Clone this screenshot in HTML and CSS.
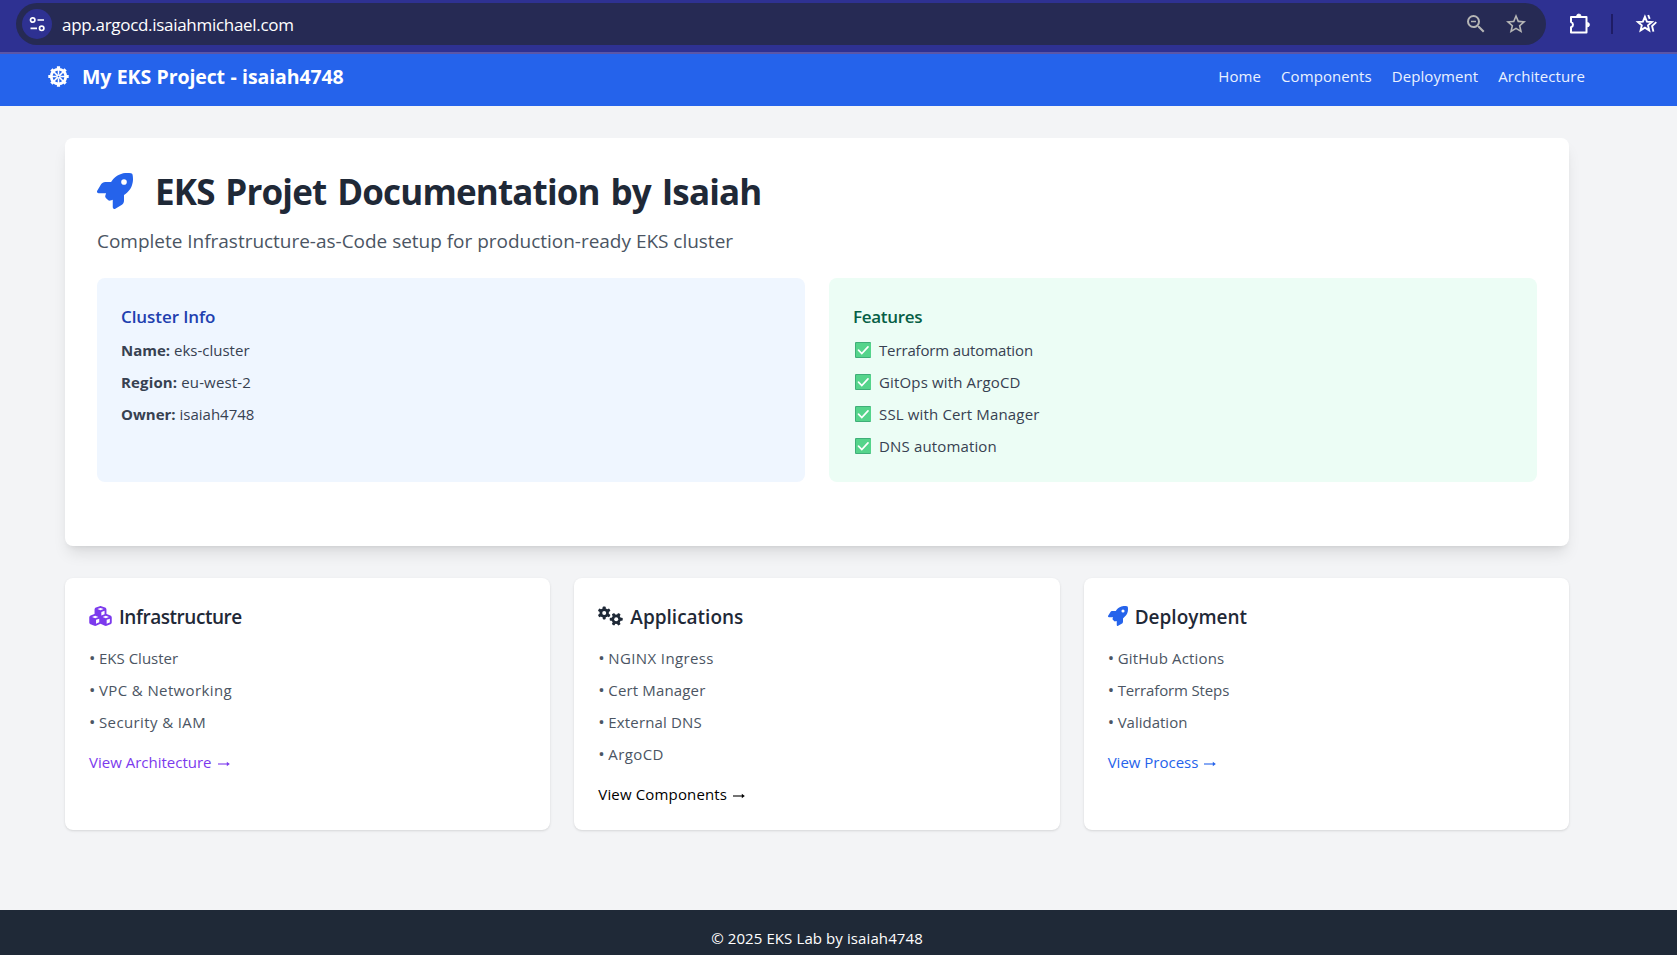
FILE: index.html
```html
<!DOCTYPE html>
<html lang="en">
<head>
<meta charset="utf-8">
<title>EKS Lab</title>
<link rel="stylesheet" href="styles.css">
</head>
<body>
<svg class="defs" aria-hidden="true">
  <symbol id="rocket" viewBox="0 0 512 512"><path d="M156.600 384.900L125.700 354c-8.500-8.500-11.500-20.800-7.700-32.200c3-8.900 7-20.500 11.800-33.800L24 288c-8.600 0-16.600-4.600-20.900-12.100s-4.200-16.700 .2-24.100l52.500-88.500c13-21.900 36.500-35.300 61.900-35.300l82.300 0c2.400-4 4.800-7.700 7.200-11.300C289.100-4.100 411.100-8.100 483.900 5.300c11.600 2.100 20.600 11.200 22.800 22.800c13.400 72.900 9.300 194.800-111.400 276.700c-3.500 2.400-7.300 4.800-11.300 7.200v82.300c0 25.400-13.400 49-35.300 61.900l-88.500 52.500c-7.400 4.400-16.600 4.500-24.100 .2s-12.100-12.200-12.100-20.900V380.800c-14.100 4.900-26.400 8.900-35.700 11.900c-11.200 3.600-23.400 .5-31.800-7.800zM384 168a40 40 0 1 0 0-80 40 40 0 1 0 0 80z"/></symbol>
  <symbol id="cubes" viewBox="0 0 576 512"><path fill-rule="evenodd" d="M290.8 48.600l78.400 29.700L288 109.500 206.800 78.300l78.400-29.700c1.800-.7 3.800-.7 5.700 0zM136 92.500V204.700c-1.300 .4-2.600 .8-3.900 1.300l-96 36.400C14.400 250.600 0 271.500 0 294.700V413.900c0 22.200 13.100 42.300 33.500 51.300l96 42.200c14.400 6.300 30.700 6.300 45.100 0L288 457.500l113.500 49.900c14.400 6.300 30.700 6.300 45.100 0l96-42.200c20.300-8.900 33.500-29.100 33.500-51.300V294.700c0-23.300-14.400-44.100-36.100-52.400l-96-36.400c-1.300-.5-2.600-.9-3.900-1.300V92.500c0-23.300-14.400-44.100-36.100-52.400L308 3.700c-12.800-4.800-26.900-4.800-39.700 0l-96 36.400C150.400 48.400 136 69.300 136 92.500zM392 210.600l-82.400 31.200V152.600L392 121v89.600zM154.800 250.900l78.400 29.700L152 311.700 70.800 280.600l78.400-29.700c1.800-.7 3.800-.7 5.700 0zm18.800 204.400V354.800L256 323.200v95.900l-82.400 36.200zM421.200 250.900c1.800-.7 3.800-.7 5.700 0l78.400 29.700L424 311.700l-81.200-31.100 78.400-29.700zM523.200 421.200l-77.600 34.100V354.800L528 323.200v90.700c0 3.200-1.900 6-4.800 7.300z"/></symbol>
  <symbol id="gear" viewBox="-7 -7 14 14"><circle r="4.700"/><g><rect x="-1.500" y="-6.500" width="3" height="13" rx=".8"/><rect x="-1.500" y="-6.500" width="3" height="13" rx=".8" transform="rotate(60)"/><rect x="-1.500" y="-6.500" width="3" height="13" rx=".8" transform="rotate(120)"/></g><circle r="2" fill="#fff"/></symbol>
  <symbol id="check" viewBox="0 0 16 16"><rect width="16" height="16" rx="1" fill="#3fae78"/><rect x="1" y="1" width="15" height="14" rx=".5" fill="#55d48b"/><path d="M3.500 8.200l3.300 3.300 6.200-6.700" fill="none" stroke="#fff" stroke-width="1.700" stroke-linecap="round"/></symbol>
  <symbol id="arrow" viewBox="0 0 12 8"><path d="M0 4h10" stroke="currentColor" stroke-width="1.100"/><path d="M8.800 1.700L11.800 4 8.800 6.300z"/></symbol>
</svg>

<div class="browser">
  <div class="omnibox">
    <span class="site"><svg class="line" width="18" height="18" viewBox="0 0 18 18" stroke-width="1.700"><circle cx="4.700" cy="5" r="2.200"/><path d="M9.500 5h6.500M2.500 13.300h6.500"/><circle cx="13.700" cy="13.300" r="2.200"/></svg></span>
    <span class="url">app.argocd.isaiahmichael.com</span>
    <svg class="dim zoom" width="24" height="24" viewBox="0 0 24 24"><path d="M15.500 14h-.79l-.28-.27A6.470 6.470 0 0 0 16 9.500 6.500 6.500 0 1 0 9.500 16c1.610 0 3.090-.59 4.230-1.570l.27.28v.79l5 4.990L20.490 19l-4.990-5zm-6 0C7.010 14 5 11.990 5 9.500S7.010 5 9.500 5 14 7.010 14 9.500 11.990 14 9.500 14zM7 8.800h5v1.500H7z"/></svg>
    <svg class="dim" width="24" height="24" viewBox="0 0 24 24"><path d="M22 9.240l-7.190-.62L12 2 9.190 8.630 2 9.240l5.460 4.730L5.820 21 12 17.270 18.180 21l-1.630-7.030L22 9.240zM12 15.400l-3.760 2.270 1-4.280-3.320-2.880 4.380-.38L12 6.100l1.710 4.040 4.380.38-3.320 2.880 1 4.280L12 15.400z"/></svg>
  </div>
  <svg class="ext" width="22" height="22" viewBox="0 0 22 22"><path d="M2 4h15.500v15.500H2v-5.200a2.700 2.700 0 0 0 0-5.200z" fill="none" stroke="#fff" stroke-width="2" stroke-linejoin="round"/><path d="M7.600 3.200a2.200 2.200 0 0 1 4.400 0zM18.300 9.500a2.200 2.200 0 0 1 0 4.400z" fill="#fff" stroke="#fff" stroke-width=".8"/></svg>
  <span class="divider"></span>
  <svg class="line fav" width="24" height="24" viewBox="0 0 24 24" stroke-width="1.900"><path d="M10.900 4.700l2 4.900 5 .4-3.900 3.300 1.200 5.100-4.300-2.700-4.300 2.700 1.200-5.100L3.900 10l5-.4z"/><path d="M14.200 3l1.500 3.800M22.300 10.100l-4.200 3.900 1.300 5.600"/></svg>
</div>

<nav class="topnav">
  <div class="brand">
    <svg class="line wheel" width="21" height="21" viewBox="-10.500 -10.500 21 21" stroke-width="1.500"><circle r="7.300" stroke-width="2.800"/><circle r="1.600"/><path d="M0-7V-2M0 7V2M-7 0H-2M7 0H2M-5-5L-1.400-1.400M5 5L1.400 1.400M5-5L1.400-1.400M-5 5L-1.400 1.400"/><path d="M0-10.200v2M0 10.200v-2M-10.200 0h2M10.200 0h-2M-7.100-7.100l1.400 1.400M7.100 7.100L5.700 5.700M-7.100 7.100l1.400-1.400M7.100-7.100L5.700-5.700" stroke-width="3.200"/></svg>
    <span class="brand-name">My EKS Project - isaiah4748</span>
  </div>
  <div class="links"><a>Home</a><a>Components</a><a>Deployment</a><a>Architecture</a></div>
</nav>

<main class="content">
  <section class="hero">
    <h1><svg class="blue" width="36" height="36"><use href="#rocket"/></svg><span>EKS Projet Documentation by Isaiah</span></h1>
    <p class="lead">Complete Infrastructure-as-Code setup for production-ready EKS cluster</p>
    <div class="panels">
      <div class="panel info">
        <h3>Cluster Info</h3>
        <ul><li><b>Name:</b> eks-cluster</li><li><b class="loose">Region:</b> <span class="loose">eu-west-2</span></li><li><b>Owner:</b> isaiah4748</li></ul>
      </div>
      <div class="panel features">
        <h3 class="tight">Features</h3>
        <ul>
          <li><svg width="16" height="16"><use href="#check"/></svg><span class="snug">Terraform automation</span></li>
          <li><svg width="16" height="16"><use href="#check"/></svg><span class="loose">GitOps with ArgoCD</span></li>
          <li><svg width="16" height="16"><use href="#check"/></svg><span class="loose">SSL with Cert Manager</span></li>
          <li><svg width="16" height="16"><use href="#check"/></svg><span class="loose">DNS automation</span></li>
        </ul>
      </div>
    </div>
  </section>

  <section class="cards">
    <article class="card">
      <h2><svg class="purple" width="23" height="20"><use href="#cubes"/></svg><span class="tighter">Infrastructure</span></h2>
      <ul><li><i>•</i>EKS Cluster</li><li class="wide"><i>•</i>VPC &amp; Networking</li><li class="wide"><i>•</i>Security &amp; IAM</li></ul>
      <a class="more purple">View Architecture<svg class="arrow" width="12" height="8"><use href="#arrow"/></svg></a>
    </article>
    <article class="card">
      <h2><svg width="25" height="20" viewBox="0 0 25 20"><use href="#gear" x="-.8" y="-.1" width="14" height="14"/><use href="#gear" x="11.200" y="6.300" width="14" height="14" transform="rotate(90 18.200 13.300)"/></svg><span>Applications</span></h2>
      <ul><li class="wide"><i>•</i>NGINX Ingress</li><li class="loose"><i>•</i>Cert Manager</li><li class="loose"><i>•</i>External DNS</li><li class="wide"><i>•</i>ArgoCD</li></ul>
      <a class="more loose">View Components<svg class="arrow" width="12" height="8"><use href="#arrow"/></svg></a>
    </article>
    <article class="card">
      <h2><svg class="blue" width="20" height="20"><use href="#rocket"/></svg><span>Deployment</span></h2>
      <ul><li class="loose"><i>•</i>GitHub Actions</li><li class="snug"><i>•</i>Terraform Steps</li><li><i>•</i>Validation</li></ul>
      <a class="more blue">View Process<svg class="arrow" width="12" height="8"><use href="#arrow"/></svg></a>
    </article>
  </section>
</main>
<footer>© 2025 EKS Lab by isaiah4748</footer>
</body>
</html>
```
FILE: styles.css
```css
* { box-sizing: border-box; }
body {
  margin: 0;
  height: 955px;
  overflow: hidden;
  background: #f3f4f6;
  color: #000;
  font: 15px/24px "Open Sans", "Noto Sans", sans-serif;
}
svg { fill: currentColor; flex: none; }
svg.line { fill: none; stroke: #fff; }
h1, h2, h3, p, ul { margin: 0; padding: 0; list-style: none; }
.defs { position: absolute; width: 0; height: 0; }

/* letter-spacing steps */
.tighter { letter-spacing: -.45px; }
.tight { letter-spacing: -.3px; }
.snug { letter-spacing: -.14px; }
.loose { letter-spacing: .15px; }
.wide { letter-spacing: .38px; }

.browser {
  display: flex;
  align-items: center;
  height: 54px;
  padding: 0 18px 4px 16px;
  background: #2e3192;
  border-bottom: 2px solid #5a56a8;
  color: #fff;
}
.omnibox {
  display: flex;
  align-items: center;
  width: 1530px;
  height: 42px;
  padding: 0 18px 0 6px;
  border-radius: 21px;
  background: #262a54;
}
.site {
  display: grid;
  place-items: center;
  width: 30px;
  height: 30px;
  border-radius: 50%;
  background: #2e3192;
}
.url { margin-left: 10px; padding-top: 1px; font-size: 17px; letter-spacing: -.3px; }
.dim { color: #b5b5b5; }
.zoom { margin-left: auto; margin-right: 16px; }
.ext { margin-left: 23px; }
.divider { width: 2px; height: 20px; margin-left: 20px; background: #1e1c66; }
.fav { margin-left: 21px; }

.topnav {
  display: flex;
  justify-content: space-between;
  height: 52px;
  padding: 8px 92px 16px 48px;
  background: #2563eb;
  color: #fff;
}
.brand { display: flex; align-items: center; gap: 13px; }
.wheel { margin-top: 1px; }
.brand-name { padding-top: 2px; font-size: 19.5px; font-weight: 700; line-height: 28px; letter-spacing: -.1px; word-spacing: .5px; }
.links { display: flex; align-items: center; gap: 20px; color: #eaf1ff; letter-spacing: .08px; }

.content { padding: 32px 108px 80px 65px; }
.hero {
  padding: 32px;
  border-radius: 8px;
  background: #fff;
  box-shadow: 0 10px 15px -3px rgba(0, 0, 0, .1), 0 4px 6px -4px rgba(0, 0, 0, .1);
}
.hero h1 {
  display: flex;
  gap: 22px;
  margin-bottom: 15px;
  padding-top: 2px;
  color: #1f2937;
  font-size: 35px;
  line-height: 40px;
  letter-spacing: -.84px;
  word-spacing: 2.5px;
}
.hero h1 svg { margin-top: 1px; }
.blue { color: #2563eb; }
.purple { color: #7c3aed; }
.lead { height: 27px; color: #4b5563; font-size: 19px; line-height: 28px; letter-spacing: -.02px; }
.panels { display: grid; grid-template-columns: 1fr 1fr; gap: 24px; margin: 24px 0 32px; }
.panel { height: 204px; padding: 24px; border-radius: 8px; color: #374151; }
.panel h3 { height: 28px; margin-bottom: 8px; font-size: 17px; font-weight: 600; line-height: 30px; }
.info { background: #eff6ff; }
.info h3 { color: #1e40af; letter-spacing: -.08px; }
.features { background: #ecfdf5; }
.features h3 { color: #065f46; }
.features li { display: flex; align-items: center; gap: 8px; padding-left: 2px; }
li + li { margin-top: 8px; }

.cards { display: grid; grid-template-columns: repeat(3, 1fr); gap: 24px; margin-top: 32px; }
.card {
  height: 252px;
  padding: 24px;
  border-radius: 8px;
  background: #fff;
  box-shadow: 0 1px 3px rgba(0, 0, 0, .1), 0 1px 2px -1px rgba(0, 0, 0, .1);
}
.card h2 {
  display: flex;
  align-items: center;
  gap: 7px;
  height: 28px;
  margin-bottom: 16px;
  color: #1f2937;
  font-size: 19px;
  font-weight: 600;
  line-height: 28px;
}
.card h2 span { padding-top: 2px; }
.card ul { margin-bottom: 16px; color: #4b5563; }
.card i { display: inline-block; width: 10px; font-style: normal; font-size: 17px; line-height: 20px; }
.more { display: block; }
.arrow { margin-left: 6px; }
footer { height: 45px; padding-top: 16px; padding-right: 43px; background: #1f2937; color: #fff; text-align: center; letter-spacing: .1px; }
```
